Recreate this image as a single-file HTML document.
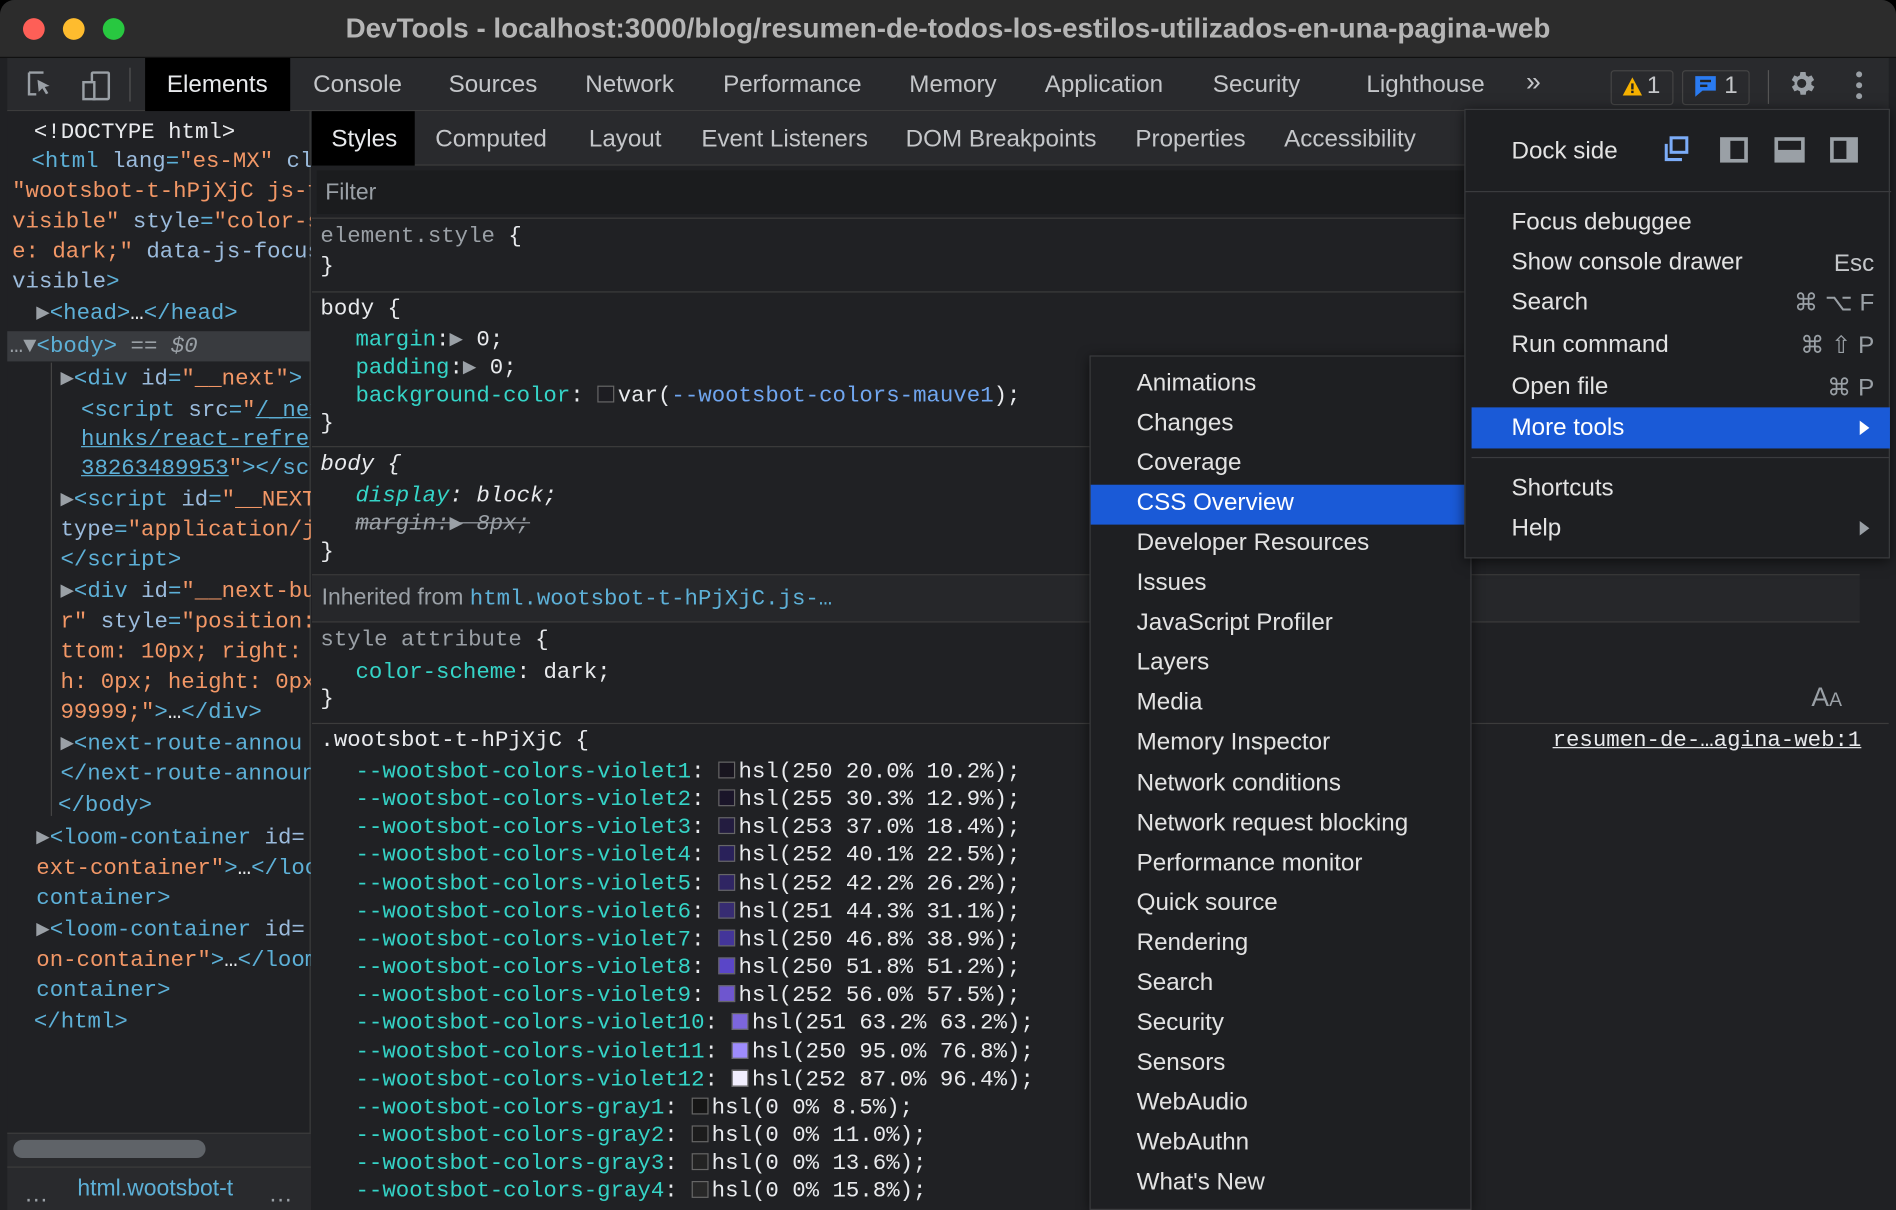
<!DOCTYPE html>
<html><head><meta charset="utf-8"><style>
*{margin:0;padding:0;box-sizing:border-box}
html,body{width:1896px;height:1210px;overflow:hidden;background:#000}
#w{position:absolute;left:0;top:0;width:1568px;height:1001px;transform:scale(1.20918,1.2088);transform-origin:0 0;background:#202124;font-family:"Liberation Sans",sans-serif;color:#c4c6c9;overflow:hidden;border-radius:12px 12px 0 0}
.a{position:absolute;white-space:nowrap}
.m{font-family:"Liberation Mono",monospace;font-size:18.5px;line-height:23px}
.u{font-size:20px;line-height:24px}
.tag{color:#5db0d7}.an{color:#9bbbdc}.av{color:#f29766}.pn{color:#35d4c7}.vv{color:#70a6f0}.g{color:#9aa0a6}.w{color:#e8eaed}
.sw{display:inline-block;width:14px;height:14px;border:1px solid #666;vertical-align:-1px;margin-right:3px}
.mi{position:absolute;left:38px;font-size:20px;color:#e3e3e3}
</style></head><body><div id="w">
<!-- title bar -->
<div class="a" style="left:0;top:0;width:1568px;height:48px;background:#2c2c2c;border-bottom:1px solid #111"></div>
<div class="a" style="left:19px;top:15px;width:18px;height:18px;border-radius:50%;background:#fe5f57"></div>
<div class="a" style="left:52px;top:15px;width:18px;height:18px;border-radius:50%;background:#febc2e"></div>
<div class="a" style="left:85px;top:15px;width:18px;height:18px;border-radius:50%;background:#28c840"></div>
<div class="a" style="left:0;width:1568px;top:10px;text-align:center;font-weight:bold;font-size:23px;color:#b5b5b5">DevTools - localhost:3000/blog/resumen-de-todos-los-estilos-utilizados-en-una-pagina-web</div>
<!-- toolbar -->
<div class="a" style="left:6px;top:48px;width:1556px;height:44px;background:#292a2d;border-bottom:1px solid #3c3c3c"></div>
<svg class="a" style="left:18px;top:56px" width="80" height="28"><path d="M6 4h12M6 4v18h6" stroke="#9aa0a6" stroke-width="2" fill="none"/><path d="M13 10l10 5-4 1 3 5-2 1-3-5-3 3z" fill="#9aa0a6"/><rect x="58" y="4" width="14" height="22" rx="1" stroke="#9aa0a6" stroke-width="2" fill="none"/><rect x="51" y="12" width="9" height="14" stroke="#9aa0a6" stroke-width="2" fill="#292a2d"/></svg>
<div class="a" style="left:107px;top:56px;width:1px;height:28px;background:#555"></div>
<div class="a" style="left:120px;top:48px;width:120px;height:44px;background:#000"></div>
<div class="a u w" style="left:138px;top:58px">Elements</div>
<div class="a u" style="left:259px;top:58px">Console</div>
<div class="a u" style="left:371px;top:58px">Sources</div>
<div class="a u" style="left:484px;top:58px">Network</div>
<div class="a u" style="left:598px;top:58px">Performance</div>
<div class="a u" style="left:752px;top:58px">Memory</div>
<div class="a u" style="left:864px;top:58px">Application</div>
<div class="a u" style="left:1003px;top:58px">Security</div>
<div class="a u" style="left:1130px;top:58px">Lighthouse</div>
<div class="a u" style="left:1262px;top:56px;font-size:22px">»</div>
<div class="a" style="left:1332px;top:58px;width:52px;height:29px;border:1px solid #444;border-radius:3px"></div>
<svg class="a" style="left:1341px;top:63px" width="18" height="17"><path d="M9 1L17 16H1z" fill="#f6b100"/><rect x="8" y="6" width="2" height="5" fill="#222"/><rect x="8" y="12" width="2" height="2" fill="#222"/></svg>
<div class="a u" style="left:1362px;top:59px">1</div>
<div class="a" style="left:1391px;top:58px;width:56px;height:29px;border:1px solid #444;border-radius:3px"></div>
<svg class="a" style="left:1401px;top:62px" width="20" height="20"><path d="M1 1h17v12H7l-6 5z" fill="#2a7bf1"/><rect x="5" y="4" width="9" height="2" fill="#222"/><rect x="5" y="8" width="6" height="2" fill="#222"/></svg>
<div class="a u" style="left:1426px;top:59px">1</div>
<div class="a" style="left:1462px;top:58px;width:1px;height:28px;background:#555"></div>
<svg class="a" style="left:1477px;top:56px" width="26" height="26" viewBox="0 0 24 24"><path fill="#9aa0a6" d="M19.4 13a7.5 7.5 0 000-2l2.1-1.6-2-3.5-2.5 1a7 7 0 00-1.7-1L15 3.3h-4l-.4 2.6a7 7 0 00-1.7 1l-2.5-1-2 3.5L6.6 11a7.5 7.5 0 000 2l-2.1 1.6 2 3.5 2.5-1a7 7 0 001.7 1l.4 2.6h4l.4-2.6a7 7 0 001.7-1l2.5 1 2-3.5zM12 15.5a3.5 3.5 0 110-7 3.5 3.5 0 010 7z"/></svg>
<div class="a" style="left:1535px;top:59px;width:5px;height:5px;border-radius:50%;background:#9aa0a6;box-shadow:0 9px #9aa0a6,0 18px #9aa0a6"></div>
<!-- left elements panel -->
<div class="a" style="left:6px;top:92px;width:251px;height:909px;background:#202124;border-right:1px solid #3c3c3c"></div>
<div class="a" style="left:6px;top:274px;width:251px;height:25px;background:#393b3f"></div>
<div class="a" style="left:6px;top:937px;width:251px;height:64px;background:#292a2d;border-top:1px solid #3c3c3c"></div>
<div class="a" style="left:11px;top:943px;width:159px;height:15px;border-radius:8px;background:#5f6368"></div>
<div class="a" style="left:6px;top:965px;width:251px;height:1px;background:#3c3c3c"></div>
<div class="a u g" style="left:20px;top:976px">…</div>
<div class="a u tag" style="left:64px;top:972px;font-size:19px">html.wootsbot-t</div>
<div class="a u g" style="left:222px;top:976px">…</div>
<div class="a" style="left:42px;top:300px;width:1px;height:375px;background:#444"></div>
<div class="a" style="left:0;top:92px;width:257px;height:845px;overflow:hidden">
<div class="a m w" style="left:28px;top:5px;line-height:25px">&lt;!DOCTYPE html&gt;</div>
<div class="a m" style="left:26px;top:30px"><span class="tag">&lt;html</span> <span class="an">lang</span><span class="tag">=</span><span class="av">"es-MX"</span> <span class="an">cl</span></div>
<div class="a m av" style="left:10px;top:55px">"wootsbot-t-hPjXjC js-f</div>
<div class="a m" style="left:10px;top:80px"><span class="av">visible"</span> <span class="an">style</span><span class="tag">=</span><span class="av">"color-s</span></div>
<div class="a m" style="left:10px;top:105px"><span class="av">e: dark;"</span> <span class="an">data-js-focus</span></div>
<div class="a m an" style="left:10px;top:130px">visible<span class="tag">&gt;</span></div>
<div class="a m tag" style="left:30px;top:156px"><span class="g">▶</span>&lt;head&gt;<span class="w">…</span>&lt;/head&gt;</div>
<div class="a m tag" style="left:8px;top:183px"><span class="g">…▼</span>&lt;body&gt; <span class="g">== <i>$0</i></span></div>
<div class="a m" style="left:50px;top:210px"><span class="g">▶</span><span class="tag">&lt;div</span> <span class="an">id</span><span class="tag">=</span><span class="av">"__next"</span><span class="tag">&gt;</span></div>
<div class="a m" style="left:67px;top:236px"><span class="tag">&lt;script</span> <span class="an">src</span><span class="tag">=</span><span class="av">"<u class="tag">/_nex</u></span></div>
<div class="a m tag" style="left:67px;top:260px"><u>hunks/react-refre</u></div>
<div class="a m tag" style="left:67px;top:284px"><u>38263489953</u><span class="av">"</span>&gt;&lt;/sc</div>
<div class="a m" style="left:50px;top:310px"><span class="g">▶</span><span class="tag">&lt;script</span> <span class="an">id</span><span class="tag">=</span><span class="av">"__NEXT</span></div>
<div class="a m" style="left:50px;top:335px"><span class="an">type</span><span class="tag">=</span><span class="av">"application/j</span></div>
<div class="a m tag" style="left:50px;top:360px">&lt;/script&gt;</div>
<div class="a m" style="left:50px;top:386px"><span class="g">▶</span><span class="tag">&lt;div</span> <span class="an">id</span><span class="tag">=</span><span class="av">"__next-bu</span></div>
<div class="a m" style="left:50px;top:411px"><span class="av">r"</span> <span class="an">style</span><span class="tag">=</span><span class="av">"position:</span></div>
<div class="a m av" style="left:50px;top:436px">ttom: 10px; right:</div>
<div class="a m av" style="left:50px;top:461px">h: 0px; height: 0px</div>
<div class="a m" style="left:50px;top:486px"><span class="av">99999;"</span><span class="tag">&gt;</span><span class="w">…</span><span class="tag">&lt;/div&gt;</span></div>
<div class="a m tag" style="left:50px;top:512px"><span class="g">▶</span>&lt;next-route-annou</div>
<div class="a m tag" style="left:50px;top:537px">&lt;/next-route-announ</div>
<div class="a m tag" style="left:48px;top:563px">&lt;/body&gt;</div>
<div class="a m tag" style="left:30px;top:590px"><span class="g">▶</span>&lt;loom-container <span class="an">id=</span></div>
<div class="a m" style="left:30px;top:615px"><span class="av">ext-container"</span><span class="tag">&gt;</span><span class="w">…</span><span class="tag">&lt;/loo</span></div>
<div class="a m tag" style="left:30px;top:640px">container&gt;</div>
<div class="a m tag" style="left:30px;top:666px"><span class="g">▶</span>&lt;loom-container <span class="an">id=</span></div>
<div class="a m" style="left:30px;top:691px"><span class="av">on-container"</span><span class="tag">&gt;</span><span class="w">…</span><span class="tag">&lt;/loom</span></div>
<div class="a m tag" style="left:30px;top:716px">container&gt;</div>
<div class="a m tag" style="left:28px;top:742px">&lt;/html&gt;</div>
</div>
<!-- styles pane -->
<div class="a" style="left:258px;top:92px;width:1304px;height:45px;background:#292a2d;border-bottom:1px solid #3c3c3c"></div>
<div class="a" style="left:258px;top:92px;width:85px;height:45px;background:#000"></div>
<div class="a u w" style="left:274px;top:103px">Styles</div>
<div class="a u" style="left:360px;top:103px">Computed</div>
<div class="a u" style="left:487px;top:103px">Layout</div>
<div class="a u" style="left:580px;top:103px">Event Listeners</div>
<div class="a u" style="left:749px;top:103px">DOM Breakpoints</div>
<div class="a u" style="left:939px;top:103px">Properties</div>
<div class="a u" style="left:1062px;top:103px">Accessibility</div>
<div class="a" style="left:262px;top:141px;width:1300px;height:36px;background:#1b1c1e"></div>
<div class="a u g" style="left:269px;top:148px;font-size:19px">Filter</div>
<div class="a" style="left:258px;top:180px;width:1304px;height:1px;background:#3c3c3c"></div>
<div class="a" style="left:258px;top:241px;width:1304px;height:1px;background:#3c3c3c"></div>
<div class="a" style="left:258px;top:369px;width:1304px;height:1px;background:#3c3c3c"></div>
<div class="a" style="left:258px;top:475px;width:1280px;height:1px;background:#3c3c3c"></div>
<div class="a" style="left:258px;top:476px;width:1280px;height:38px;background:#26272a"></div>
<div class="a" style="left:258px;top:514px;width:1280px;height:1px;background:#3c3c3c"></div>
<div class="a" style="left:258px;top:598px;width:1304px;height:1px;background:#3c3c3c"></div>
<div class="a m g" style="left:265px;top:184px">element.style <span class="w">{</span></div>
<div class="a m w" style="left:265px;top:209px">}</div>
<div class="a m w" style="left:265px;top:244px">body {</div>
<div class="a m" style="left:294px;top:270px"><span class="pn">margin</span><span class="w">:<span class="g">▶</span> 0;</span></div>
<div class="a m" style="left:294px;top:293px"><span class="pn">padding</span><span class="w">:<span class="g">▶</span> 0;</span></div>
<div class="a m" style="left:294px;top:316px"><span class="pn">background-color</span><span class="w">: <span class="sw" style="background:#1d1d22"></span>var(<span class="vv">--wootsbot-colors-mauve1</span>);</span></div>
<div class="a m w" style="left:265px;top:339px">}</div>
<div class="a m w" style="left:265px;top:373px"><i>body {</i></div>
<div class="a m" style="left:294px;top:399px"><i><span class="pn">display</span><span class="w">: block;</span></i></div>
<div class="a m g" style="left:294px;top:422px"><i><s>margin:▶ 8px;</s></i></div>
<div class="a m w" style="left:265px;top:445px">}</div>
<div class="a u g" style="left:266px;top:483px;font-size:19px">Inherited from <span class="m tag" style="font-size:18.5px">html.wootsbot-t-hPjXjC.js-…</span></div>
<div class="a m g" style="left:265px;top:518px">style attribute <span class="w">{</span></div>
<div class="a m" style="left:294px;top:545px"><span class="pn">color-scheme</span><span class="w">: dark;</span></div>
<div class="a m w" style="left:265px;top:567px">}</div>
<div class="a m w" style="left:265px;top:601px">.wootsbot-t-hPjXjC {</div>
<div class="a m" style="left:294px;top:627px"><span class="pn">--wootsbot-colors-violet1</span><span class="w">: <span class="sw" style="background:#18151f"></span>hsl(250 20.0% 10.2%);</span></div>
<div class="a m" style="left:294px;top:650px"><span class="pn">--wootsbot-colors-violet2</span><span class="w">: <span class="sw" style="background:#1a1529"></span>hsl(255 30.3% 12.9%);</span></div>
<div class="a m" style="left:294px;top:673px"><span class="pn">--wootsbot-colors-violet3</span><span class="w">: <span class="sw" style="background:#231c40"></span>hsl(253 37.0% 18.4%);</span></div>
<div class="a m" style="left:294px;top:696px"><span class="pn">--wootsbot-colors-violet4</span><span class="w">: <span class="sw" style="background:#29215a"></span>hsl(252 40.1% 22.5%);</span></div>
<div class="a m" style="left:294px;top:720px"><span class="pn">--wootsbot-colors-violet5</span><span class="w">: <span class="sw" style="background:#2f2563"></span>hsl(252 42.2% 26.2%);</span></div>
<div class="a m" style="left:294px;top:743px"><span class="pn">--wootsbot-colors-violet6</span><span class="w">: <span class="sw" style="background:#372c72"></span>hsl(251 44.3% 31.1%);</span></div>
<div class="a m" style="left:294px;top:766px"><span class="pn">--wootsbot-colors-violet7</span><span class="w">: <span class="sw" style="background:#43359a"></span>hsl(250 46.8% 38.9%);</span></div>
<div class="a m" style="left:294px;top:789px"><span class="pn">--wootsbot-colors-violet8</span><span class="w">: <span class="sw" style="background:#5a46c8"></span>hsl(250 51.8% 51.2%);</span></div>
<div class="a m" style="left:294px;top:812px"><span class="pn">--wootsbot-colors-violet9</span><span class="w">: <span class="sw" style="background:#6e56cf"></span>hsl(252 56.0% 57.5%);</span></div>
<div class="a m" style="left:294px;top:835px"><span class="pn">--wootsbot-colors-violet10</span><span class="w">: <span class="sw" style="background:#7c66dc"></span>hsl(251 63.2% 63.2%);</span></div>
<div class="a m" style="left:294px;top:859px"><span class="pn">--wootsbot-colors-violet11</span><span class="w">: <span class="sw" style="background:#9e8cfc"></span>hsl(250 95.0% 76.8%);</span></div>
<div class="a m" style="left:294px;top:882px"><span class="pn">--wootsbot-colors-violet12</span><span class="w">: <span class="sw" style="background:#f1eefe"></span>hsl(252 87.0% 96.4%);</span></div>
<div class="a m" style="left:294px;top:905px"><span class="pn">--wootsbot-colors-gray1</span><span class="w">: <span class="sw" style="background:#161616"></span>hsl(0 0% 8.5%);</span></div>
<div class="a m" style="left:294px;top:928px"><span class="pn">--wootsbot-colors-gray2</span><span class="w">: <span class="sw" style="background:#1c1c1c"></span>hsl(0 0% 11.0%);</span></div>
<div class="a m" style="left:294px;top:951px"><span class="pn">--wootsbot-colors-gray3</span><span class="w">: <span class="sw" style="background:#232323"></span>hsl(0 0% 13.6%);</span></div>
<div class="a m" style="left:294px;top:974px"><span class="pn">--wootsbot-colors-gray4</span><span class="w">: <span class="sw" style="background:#282828"></span>hsl(0 0% 15.8%);</span></div>
<div class="a u g" style="left:1498px;top:565px;font-size:22px">A<span style="font-size:16px">A</span></div>
<div class="a m w" style="left:1284px;top:601px"><u>resumen-de-…agina-web:1</u></div>
<!-- submenu -->
<div class="a" style="left:901px;top:294px;width:316px;height:707px;background:#1e1f22;border:1px solid #3a3b3e;box-shadow:0 2px 10px rgba(0,0,0,.6)">
<div class="a" style="left:0;top:106px;width:316px;height:33px;background:#1a5ad7"></div>
<div class="mi" style="top:11px">Animations</div>
<div class="mi" style="top:44px">Changes</div>
<div class="mi" style="top:77px">Coverage</div>
<div class="mi" style="top:110px;color:#fff">CSS Overview</div>
<div class="mi" style="top:143px">Developer Resources</div>
<div class="mi" style="top:176px">Issues</div>
<div class="mi" style="top:209px">JavaScript Profiler</div>
<div class="mi" style="top:242px">Layers</div>
<div class="mi" style="top:275px">Media</div>
<div class="mi" style="top:308px">Memory Inspector</div>
<div class="mi" style="top:342px">Network conditions</div>
<div class="mi" style="top:375px">Network request blocking</div>
<div class="mi" style="top:408px">Performance monitor</div>
<div class="mi" style="top:441px">Quick source</div>
<div class="mi" style="top:474px">Rendering</div>
<div class="mi" style="top:507px">Search</div>
<div class="mi" style="top:540px">Security</div>
<div class="mi" style="top:573px">Sensors</div>
<div class="mi" style="top:606px">WebAudio</div>
<div class="mi" style="top:639px">WebAuthn</div>
<div class="mi" style="top:672px">What's New</div>
</div>
<!-- main menu -->
<div class="a" style="left:1211px;top:90px;width:352px;height:372px;background:#1e1f22;border:1px solid #3a3b3e;box-shadow:0 2px 10px rgba(0,0,0,.6)">
<div class="mi" style="top:23px">Dock side</div>
<svg class="a" style="left:163px;top:21px" width="290" height="24"><rect x="7" y="2" width="13" height="12" fill="none" stroke="#7cacf8" stroke-width="2.5"/><path d="M3 7v13h13" fill="none" stroke="#7cacf8" stroke-width="2.5"/><rect x="49" y="3" width="20" height="18" fill="none" stroke="#9aa0a6" stroke-width="3"/><rect x="49" y="3" width="7" height="18" fill="#9aa0a6"/><rect x="94" y="3" width="22" height="18" fill="none" stroke="#9aa0a6" stroke-width="3"/><rect x="94" y="12" width="22" height="9" fill="#9aa0a6"/><rect x="140" y="3" width="20" height="18" fill="none" stroke="#9aa0a6" stroke-width="3"/><rect x="152" y="3" width="8" height="18" fill="#9aa0a6"/></svg>
<div class="a" style="left:0;top:67px;width:352px;height:1px;background:#3a3b3e"></div>
<div class="mi" style="top:82px">Focus debuggee</div>
<div class="mi" style="top:115px">Show console drawer</div><div class="a u" style="right:12px;top:115px">Esc</div>
<div class="mi" style="top:148px">Search</div><div class="a u g" style="right:12px;top:148px">⌘ ⌥ F</div>
<div class="mi" style="top:183px">Run command</div><div class="a u g" style="right:12px;top:183px">⌘ ⇧ P</div>
<div class="mi" style="top:218px">Open file</div><div class="a u g" style="right:12px;top:218px">⌘ P</div>
<div class="a" style="left:5px;top:246px;width:346px;height:34px;background:#1a5ad7"></div>
<div class="mi" style="top:252px;color:#fff">More tools</div>
<svg class="a" style="left:325px;top:256px" width="10" height="14"><path d="M1 1l8 6-8 6z" fill="#fff"/></svg>
<div class="a" style="left:5px;top:287px;width:346px;height:1px;background:#3a3b3e"></div>
<div class="mi" style="top:302px">Shortcuts</div>
<div class="mi" style="top:335px">Help</div>
<svg class="a" style="left:325px;top:339px" width="10" height="14"><path d="M1 1l8 6-8 6z" fill="#9aa0a6"/></svg>
</div>
</div></body></html>
